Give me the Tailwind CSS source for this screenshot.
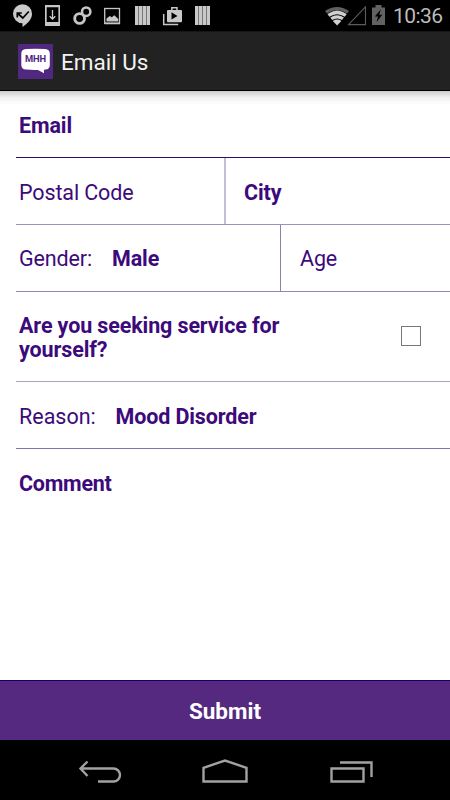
<!DOCTYPE html>
<html lang="en">
<head>
<meta charset="utf-8">
<meta name="viewport" content="width=device-width">
<title>Email Us</title>
<script src="https://cdn.jsdelivr.net/npm/@tailwindcss/browser@4"></script>
</head>
<body class="bg-black overflow-hidden">
<div class="w-[450px] h-[800px] flex flex-col bg-white text-[#3c0a7a] text-[21.5px] leading-[24px] tracking-[-0.12px] font-[Roboto,sans-serif]">
  <!-- Status bar -->
  <div class="h-[31px] shrink-0 bg-black flex justify-between">
    <svg class="w-[216px] h-[31px]" viewBox="0 0 216 31" fill="none">
      <path d="M22.500 4.300a9.500 9.500 0 0 1 9.500 9.500c0 5.500-4 9.500-9.500 13.200v-3.700a9.500 9.500 0 0 1 0-19z" fill="#cacaca"/>
      <path d="M17.300 17.500v-4.500h4.500M17.800 13.500l5 4.500 6-6.500" stroke="#000" stroke-width="1.700"/>
      <path fill-rule="evenodd" d="M45 5h15v21H45zM46.700 7.300v14.700h11.700V7.300z" fill="#c6c6c6"/>
      <path d="M52.500 10v9M49.700 16.200l2.800 2.900 2.800-2.900" stroke="#d0d0d0" stroke-width="1.300"/>
      <circle cx="79.600" cy="18.500" r="4.900" stroke="#c6c6c6" stroke-width="2.900"/>
      <circle cx="86.200" cy="11.700" r="4.200" fill="#000" stroke="#c6c6c6" stroke-width="2.500"/>
      <rect x="104.700" y="8.500" width="14.800" height="15" stroke="#c6c6c6" stroke-width="1.300"/>
      <path d="M106.500 21.500v-3l3.300-2.500 2 1.200 2.500-1.900 4 3.800v2.400z" fill="#c6c6c6"/>
      <path d="M105 23.300h15" stroke="#c6c6c6" stroke-width="1.700"/>
      <rect x="135" y="6" width="15" height="19" fill="#c9c9c9"/><path d="M138.500 6v19M142.500 6v19M146.500 6v19" stroke="#777" stroke-width="1"/>
      <path d="M163.700 14v10.500h14.500" stroke="#c6c6c6" stroke-width="1.500"/>
      <rect x="167" y="10" width="15" height="12.200" rx="1" fill="#c9c9c9"/>
      <path d="M171.800 10.500V7.800h5.200v2.700" stroke="#c6c6c6" stroke-width="1.500"/>
      <path d="M171.500 12.300v7.200l6-3.600z" fill="#000"/>
      <rect x="195" y="6" width="15" height="19" fill="#c9c9c9"/><path d="M198.500 6v19M202.500 6v19M206.500 6v19" stroke="#777" stroke-width="1"/>
    </svg>
    <div class="flex">
      <svg class="w-[66px] h-[31px]" viewBox="324 0 66 31" fill="none">
        <path d="M325 11q12-8 24 0l-2 2.500q-10-6.500-20 0z" fill="#606060"/>
        <path d="M327.500 14.100q9.700-7 19.200 0l-1.900 2.600q-7.700-5-15.400 0z" fill="#d0d0d0"/>
        <path d="M330.300 17.500q6.800-4.600 13.600 0l-1.900 2.500q-4.900-3-9.800 0z" fill="#d0d0d0"/>
        <path d="M332.800 20.900q4.300-2.600 8.600 0l-4.300 4.700z" fill="#d0d0d0"/>
        <path d="M348.500 24.600h17V6.800z" stroke="#5c5c5c" stroke-width="1.100"/>
        <path d="M372 7.500h3.500V5h6v2.500h3.500V25h-13z" fill="#626262"/>
        <path d="M380.800 9.500l-6 7h3.200l-1.400 5.500 5.700-7.200h-3z" fill="#000"/>
      </svg>
      <span class="w-[60px] pl-[3px] pt-[4px] text-[21px] leading-[24px] tracking-[-0.55px] text-[#bcbcbc] whitespace-nowrap">10:36</span>
    </div>
  </div>
  <!-- Action bar -->
  <header class="h-[60px] shrink-0 bg-[#222222] border-t border-b border-t-[#161616] border-b-black flex items-center pl-[18px] gap-[8px]">
    <svg class="w-[35px] h-[35px]" viewBox="0 0 35 35">
      <path d="M0 0h35v35H0z" fill="#50287f"/>
      <path d="M8 5Q17.500 4.300 27 5q4.800.3 4.800 4.500v11.500q0 4.200-4.300 4.600l-1.500.1v3.600L20 26q-7 .2-12-.4-4.700-.4-4.700-4.600v-11.500Q3.300 5.300 8 5z" fill="#fff"/>
      <text x="7" y="18.300" textLength="21" lengthAdjust="spacingAndGlyphs" font-family="Roboto, sans-serif" font-weight="700" font-size="8.800" fill="#50287f">MHH</text>
    </svg>
    <h1 class="text-[22.5px] tracking-normal text-[#f3f3f3] font-normal pt-px">Email Us</h1>
  </header>
  <!-- Form -->
  <main class="h-[589px] shrink-0 pl-[16px] flex flex-col relative">
    <div class="absolute left-0 top-0 w-full h-[14px] bg-linear-to-b from-black/20 via-black/5 to-transparent"></div>
    <div class="h-[67px] shrink-0 border-b border-[#2c1066] flex items-center pl-[3px] pt-[3px] font-bold"><span>Email</span></div>
    <div class="h-[67px] shrink-0 border-b border-[#9d90ba] flex">
      <div class="w-[210px] border-r-2 border-[#c5bcd5] flex items-center pl-[3px] pt-[3px]"><span>Postal Code</span></div>
      <div class="flex items-center pl-[18px] pt-[3px] font-bold"><span>City</span></div>
    </div>
    <div class="h-[67px] shrink-0 border-b border-[#9585b4] flex">
      <div class="w-[265px] border-r border-[#8f7eb0] flex items-center pl-[3px] pt-[2px]"><span class="w-[93px]">Gender:</span><span class="font-bold">Male</span></div>
      <div class="flex items-center pl-[19px] pt-[2px]"><span>Age</span></div>
    </div>
    <div class="h-[90px] shrink-0 border-b border-[#aaa0c4] flex items-center justify-between pl-[3px] pr-[29px]">
      <span class="w-[290px] pt-[3px] font-bold">Are you seeking service for<br>yourself?</span>
      <span class="w-[20px] h-[20px] border border-[#777] mb-[2px]"></span>
    </div>
    <div class="h-[67px] shrink-0 border-b border-[#8373aa] flex items-center pl-[3px] pt-[3px]"><span class="w-[96.5px] tracking-normal">Reason:</span><span class="font-bold">Mood Disorder</span></div>
    <div class="pl-[3px] pt-[23px] font-bold"><span class="tracking-[-0.25px]">Comment</span></div>
  </main>
  <button class="h-[60px] shrink-0 bg-[#54297f] border-t border-[#170065] text-white font-bold text-[22.5px] tracking-normal">Submit</button>
  <!-- Navigation bar -->
  <nav class="h-[60px] shrink-0 bg-black">
    <svg class="w-[450px] h-[60px]" viewBox="0 0 450 60" fill="none" stroke="#a2a2a2" stroke-width="2.400">
      <path d="M81 28.500h32.500a6.500 6.500 0 0 1 0 13H98M87.500 21.500l-7 7 7 7.500"/>
      <path d="M203.500 41.500V27.800L225 20.500l21.500 7.300v13.700z"/>
      <path d="M331.500 28.500h32v13h-32zM340 22.500h31.500V37"/>
    </svg>
  </nav>
</div>
</body>
</html>
